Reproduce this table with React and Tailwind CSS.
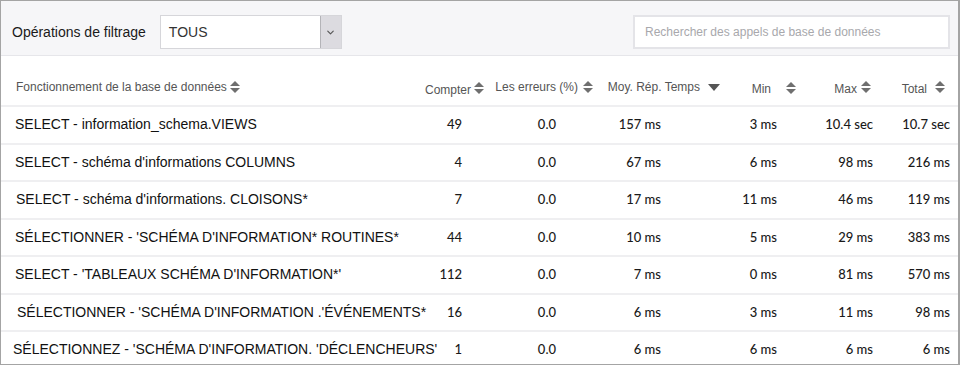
import { ChevronDown } from 'lucide-react';

const rows = [
  ['SELECT - information_schema.VIEWS', '49', '0.0', '157 ms', '3 ms', '10.4 sec', '10.7 sec'],
  ["SELECT - schéma d'informations COLUMNS", '4', '0.0', '67 ms', '6 ms', '98 ms', '216 ms'],
  ["SELECT - schéma d'informations. CLOISONS*", '7', '0.0', '17 ms', '11 ms', '46 ms', '119 ms'],
  ["SÉLECTIONNER - 'SCHÉMA D'INFORMATION* ROUTINES*", '44', '0.0', '10 ms', '5 ms', '29 ms', '383 ms'],
  ["SELECT - 'TABLEAUX SCHÉMA D'INFORMATION*'", '112', '0.0', '7 ms', '0 ms', '81 ms', '570 ms'],
  ["SÉLECTIONNER - 'SCHÉMA D'INFORMATION .'ÉVÉNEMENTS*", '16', '0.0', '6 ms', '3 ms', '11 ms', '98 ms'],
  ["SÉLECTIONNEZ - 'SCHÉMA D'INFORMATION. 'DÉCLENCHEURS'", '1', '0.0', '6 ms', '6 ms', '6 ms', '6 ms'],
];

// the screenshot's first column isn't perfectly aligned
const namePad = ['pl-[14px]', 'pl-[14px]', 'pl-[15px]', 'pl-[14px]', 'pl-[14px]', 'pl-[16px]', 'pl-[12px]'];

// data cell right padding per numeric column
const dataPad = ['pr-[24px]', 'pr-[45px]', 'pr-[65px]', 'pr-[29px]', 'pr-[8px]', 'pr-[8px]'];

function SortIcon() {
  return (
    <svg width="10" height="12" viewBox="0 0 10 12" className="shrink-0">
      <path d="M5 0 L10 5 L0 5 Z" fill="#6f6f6f" />
      <path d="M0 7 L10 7 L5 12 Z" fill="#6f6f6f" />
    </svg>
  );
}

function SortDown() {
  return (
    <svg width="12" height="7" viewBox="0 0 12 7" className="shrink-0">
      <path d="M0 0 L12 0 L6 7 Z" fill="#555" />
    </svg>
  );
}

const cols = 'grid grid-cols-[420px_65px_115px_125px_80px_75px_1fr]';

export default function App() {
  return (
    <div className="w-[960px] h-[365px] overflow-hidden bg-white border border-r-2 border-[#a4a4a4] font-['Liberation_Sans',Arial,sans-serif]">
      <div className="h-[55px] bg-[#f6f6f8] border-b border-[#e6e6ea] flex items-center pt-[8px] pl-[11px] pr-[8px]">
        <span className="text-[14px] text-[#1a1a1a]">Opérations de filtrage</span>
        <div className="ml-[14px] w-[182px] h-[34px] bg-white border border-[#d6d6da] flex items-stretch">
          <span className="flex-1 flex items-center pl-[8px] text-[14px] text-[#333]">TOUS</span>
          <span className="w-[21px] bg-[#dcdbe0] border-l border-[#b4b4b8] flex items-center justify-center">
            <ChevronDown className="w-[11px] h-[11px] text-[#555]" strokeWidth={2.5} />
          </span>
        </div>
        <div className="ml-auto w-[317px] h-[34px] bg-white border-2 border-[#e4e4e8] flex items-center pl-[10px] text-[12px] text-[#a8a8ac]">
          Rechercher des appels de base de données
        </div>
      </div>

      <div className={`${cols} h-[51px] border-b-2 border-[#efeff1] text-[12px] text-[#555]`}>
        <div className="flex items-end pb-[9px] pl-[15px]">
          <span className="flex items-center gap-[3px]">Fonctionnement de la base de données <SortIcon /></span>
        </div>
        <div className="flex items-end justify-end pb-[8px] pr-[2px]">
          <span className="flex items-center gap-[3px]">
            <span className="translate-y-[2px]">Compter</span> <SortIcon />
          </span>
        </div>
        <div className="flex items-end justify-end pb-[9px] pr-[8px]">
          <span className="flex items-center gap-[5px]">Les erreurs (%) <SortIcon /></span>
        </div>
        <div className="flex items-end justify-end pb-[9px] pr-[6px]">
          <span className="flex items-center gap-[8px]">Moy. Rép. Temps <SortDown /></span>
        </div>
        <div className="flex items-end justify-end pb-[8px] pr-[10px]">
          <span className="flex items-center gap-[15px]">
            <span className="translate-y-[1px]">Min</span> <SortIcon />
          </span>
        </div>
        <div className="flex items-end justify-end pb-[9px] pr-[10px]">
          <span className="flex items-center gap-[4px]">
            <span className="translate-y-[2px]">Max</span> <SortIcon />
          </span>
        </div>
        <div className="flex items-end justify-end pb-[9px] pr-[13px]">
          <span className="flex items-center gap-[8px]">
            <span className="translate-y-[2px]">Total</span> <SortIcon />
          </span>
        </div>
      </div>

      {rows.map((r, i) => (
        <div key={i} className={`${cols} h-[37.5px] border-b-2 border-[#efeff1] items-center`}>
          <div className={`${namePad[i]} text-[14px] text-[#111] whitespace-nowrap`}>{r[0]}</div>
          {r.slice(1).map((v, j) => (
            <div key={j} className={`text-right ${dataPad[j]} font-['Lato',sans-serif] font-medium text-[13px] text-[#1a1a1a] whitespace-nowrap`}>
              {v}
            </div>
          ))}
        </div>
      ))}
    </div>
  );
}
